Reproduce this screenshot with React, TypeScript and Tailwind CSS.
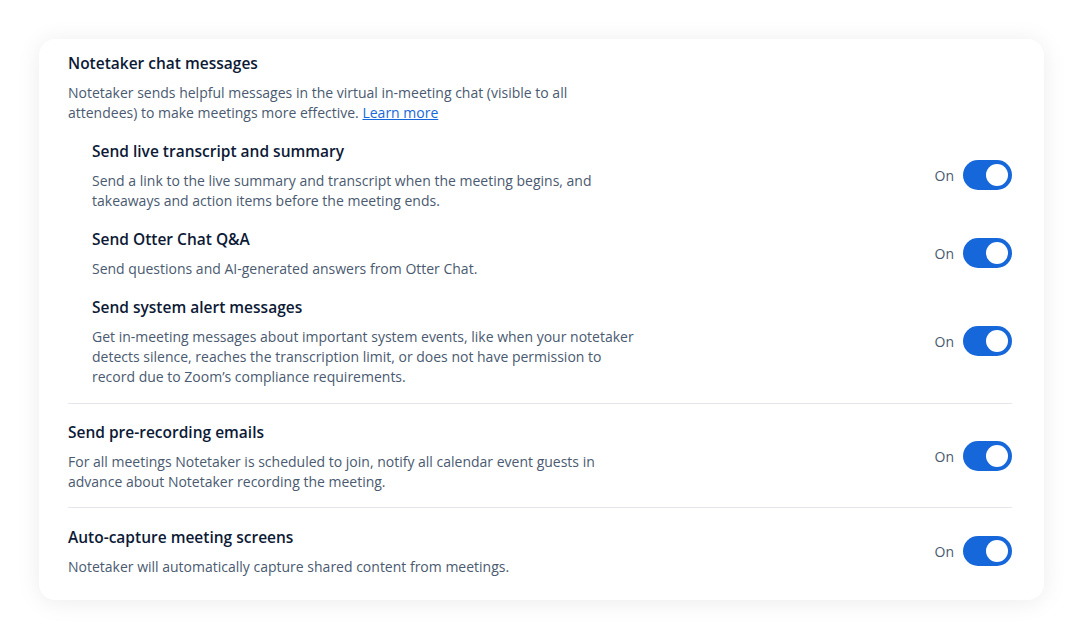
const font = { fontFamily: "'Open Sans', 'Noto Sans', sans-serif" };

function Toggle() {
    return (
        <div className="flex items-center gap-[9px] shrink-0 -mt-[2px]">
            <span className="text-[14px] text-[#4a5a70]">On</span>
            <div className="w-[49px] h-[30px] rounded-full bg-[#1667d9] flex items-center justify-end pr-[4px]">
                <div className="w-[22px] h-[22px] rounded-full bg-white"></div>
            </div>
        </div>
    );
}

function Setting({ title, lines, indent }: { title: string; lines: string[]; indent?: boolean }) {
    return (
        <div className={`flex items-center justify-between ${indent ? "pl-6" : ""}`}>
            <div>
                <h3 className="text-[15.5px] font-semibold text-[#0d1a36] leading-5 mb-[10px]">{title}</h3>
                <p className="text-[14px] text-[#4a5a70] leading-5">
                    {lines.map((line, i) => (
                        <span key={i} className="block whitespace-nowrap">{line}</span>
                    ))}
                </p>
            </div>
            <Toggle />
        </div>
    );
}

export default function App() {
    return (
        <div className="w-[1083px] h-[639px] bg-white p-[39px]" style={font}>
            <div className="w-[1005px] h-[561px] rounded-2xl bg-white shadow-[0_2px_24px_rgba(0,0,0,0.08)] pl-[29px] pr-[32px] pt-[14px]">
                {/* Chat messages group */}
                <div>
                    <h2 className="text-[15.5px] font-semibold text-[#0d1a36] leading-5">Notetaker chat messages</h2>
                    <p className="text-[14px] text-[#4a5a70] leading-5 mt-[10px]">
                        <span className="block whitespace-nowrap">Notetaker sends helpful messages in the virtual in-meeting chat (visible to all</span>
                        <span className="block whitespace-nowrap">
                            attendees) to make meetings more effective.{" "}
                            <a className="text-[#1667d9] underline">Learn more</a>
                        </span>
                    </p>
                </div>

                <div className="mt-[18px] flex flex-col gap-[18px]">
                    <Setting
                        indent
                        title="Send live transcript and summary"
                        lines={[
                            "Send a link to the live summary and transcript when the meeting begins, and",
                            "takeaways and action items before the meeting ends.",
                        ]}
                    />
                    <Setting
                        indent
                        title="Send Otter Chat Q&A"
                        lines={["Send questions and AI-generated answers from Otter Chat."]}
                    />
                    <Setting
                        indent
                        title="Send system alert messages"
                        lines={[
                            "Get in-meeting messages about important system events, like when your notetaker",
                            "detects silence, reaches the transcription limit, or does not have permission to",
                            "record due to Zoom’s compliance requirements.",
                        ]}
                    />
                </div>

                <div className="border-t border-[#e3e6ea] mt-[16px] pt-[18px]">
                    <Setting
                        title="Send pre-recording emails"
                        lines={[
                            "For all meetings Notetaker is scheduled to join, notify all calendar event guests in",
                            "advance about Notetaker recording the meeting.",
                        ]}
                    />
                </div>

                <div className="border-t border-[#e3e6ea] mt-[15px] pt-[19px]">
                    <Setting
                        title="Auto-capture meeting screens"
                        lines={["Notetaker will automatically capture shared content from meetings."]}
                    />
                </div>
            </div>
        </div>
    );
}
